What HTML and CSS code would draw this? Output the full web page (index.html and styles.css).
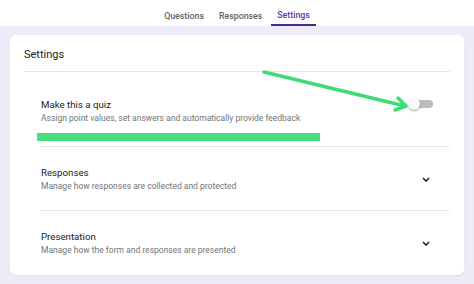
FILE: index.html
```html
<!DOCTYPE html>
<html lang="en">
<head>
  <meta charset="UTF-8" />
  <title>Settings</title>
  <link rel="stylesheet" href="styles.css">
</head>
<body>

  <div class="tabs">
    <span class="tab">Questions</span>
    <span class="tab">Responses</span>
    <span class="tab active">Settings</span>
  </div>

  <div class="page">
    <div class="card">
      <div class="card-title">Settings</div>

      <div class="section quiz">
        <div class="row">
          <div class="text">
            <div class="title">Make this a quiz</div>
            <div class="sub">Assign point values, set answers and automatically provide feedback</div>
          </div>
          <div class="toggle"><span class="knob"></span></div>
        </div>
        <div class="highlight"></div>
      </div>

      <div class="section">
        <div class="row">
          <div class="text">
            <div class="title">Responses</div>
            <div class="sub">Manage how responses are collected and protected</div>
          </div>
          <svg class="chevron" width="8" height="5" viewBox="0 0 8 5"><path d="M1 1 L4 4 L7 1" fill="none" stroke="#202124" stroke-width="1.6"/></svg>
        </div>
      </div>

      <div class="section last">
        <div class="row">
          <div class="text">
            <div class="title">Presentation</div>
            <div class="sub">Manage how the form and responses are presented</div>
          </div>
          <svg class="chevron" width="8" height="5" viewBox="0 0 8 5"><path d="M1 1 L4 4 L7 1" fill="none" stroke="#202124" stroke-width="1.6"/></svg>
        </div>
      </div>
    </div>
  </div>

  <!-- arrow annotation -->
  <svg class="arrow" width="474" height="284" viewBox="0 0 474 284">
    <line x1="264" y1="72" x2="405" y2="106" stroke="#3ddc74" stroke-width="3.5" stroke-linecap="round"/>
    <polyline points="398,98 406,106 395,110" fill="none" stroke="#3ddc74" stroke-width="3.5" stroke-linecap="round" stroke-linejoin="round"/>
  </svg>

</body>
</html>
```

FILE: styles.css
```css
* {
  margin: 0;
  padding: 0;
  box-sizing: border-box;
}

body {
  font-family: Roboto, 'Liberation Sans', sans-serif;
  background: #f0ebf8;
  color: #202124;
  width: 474px;
  height: 284px;
  position: relative;
  overflow: hidden;
}

.tabs {
  background: #fff;
  height: 26px;
  display: flex;
  justify-content: center;
  gap: 3px;
}

.tab {
  font-size: 8.8px;
  font-weight: 500;
  color: #5f6368;
  padding: 0 6px;
  line-height: 32px;
  height: 26px;
}

.tab.active {
  color: #5e35b1;
  border-bottom: 2px solid #4a2a8c;
  line-height: 30px;
}

.page {
  padding: 9px 10px;
}

.card {
  background: #fff;
  border-radius: 6px;
  height: 240px;
  padding: 0 14px;
  box-shadow: 0 1px 2px rgba(60, 40, 110, 0.08);
}

.card-title {
  height: 37px;
  line-height: 40px;
  font-size: 11px;
  border-bottom: 1px solid #e6e6e6;
}

.section {
  margin-left: 16px;
  padding: 0 0 0 1px;
  border-bottom: 1px solid #e8e8e8;
}

.section.last {
  border-bottom: none;
}

.row {
  display: flex;
  align-items: center;
  justify-content: space-between;
  padding: 19px 20px 17px 0;
}

.quiz .row {
  padding: 26px 17px 8px 0;
}

.title {
  font-size: 9.7px;
  line-height: 13px;
  color: #202124;
}

.sub {
  font-size: 8.5px;
  line-height: 14px;
  color: #70757a;
}

.highlight {
  width: 283px;
  height: 8px;
  margin: 0 0 5px -4px;
  background: #45e07f;
}

.toggle {
  position: relative;
  width: 19px;
  height: 8px;
  margin-top: -15px;
  background: #bdbdbd;
  border-radius: 4px;
  margin-left: 6px;
}

.knob {
  position: absolute;
  left: -6px;
  top: -2px;
  width: 12px;
  height: 12px;
  border-radius: 50%;
  background: #fafafa;
  box-shadow: 0 1px 2px rgba(0, 0, 0, 0.35);
}

.chevron {
  display: block;
}

.arrow {
  position: absolute;
  left: 0;
  top: 0;
  pointer-events: none;
}
```
